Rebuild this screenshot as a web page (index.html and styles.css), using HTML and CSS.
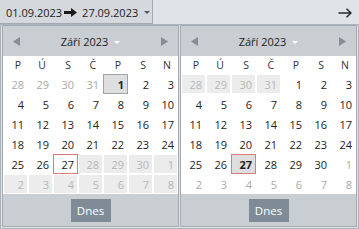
FILE: index.html
```html
<!DOCTYPE html>
<html lang="cs">
<head>
<meta charset="utf-8">
<link rel="stylesheet" href="styles.css">
</head>
<body>
<div class="toolbar">
  <div class="range">
    <span>01.09.2023</span>
    <svg class="bold-arrow" width="13" height="9" viewBox="0 0 13 9"><path d="M0 3h7V0l6 4.5-6 4.5V6H0z" fill="#1a1a1a"/></svg>
    <span class="to">27.09.2023</span>
    <svg class="caret" width="6" height="3" viewBox="0 0 6 3"><path d="M0 0h6L3 3z" fill="#555"/></svg>
  </div>
  <svg class="go" width="14" height="10" viewBox="0 0 14 10"><path d="M0.5 5H13M8.5 0.7L13 5 8.5 9.3" fill="none" stroke="#2a2a2a" stroke-width="1.5"/></svg>
</div>
<div class="popup">
  <div class="cal">
    <div class="head">
      <svg class="nav" width="7" height="9" viewBox="0 0 7 9"><path d="M7 0v9L0 4.5z" fill="#878d94"/></svg>
      <div class="title">Září 2023<svg class="tcaret" width="6" height="3" viewBox="0 0 6 3"><path d="M0 0h6L3 3z" fill="#fff"/></svg></div>
      <svg class="nav" width="7" height="9" viewBox="0 0 7 9"><path d="M0 0v9l7-4.5z" fill="#878d94"/></svg>
    </div>
    <div class="grid">
      <div class="wd">P</div><div class="wd">Ú</div><div class="wd">S</div><div class="wd">Č</div><div class="wd">P</div><div class="wd">S</div><div class="wd">N</div>
      <div class="d o">28</div><div class="d o">29</div><div class="d o">30</div><div class="d o">31</div><div class="d sel">1</div><div class="d">2</div><div class="d">3</div>
      <div class="d">4</div><div class="d">5</div><div class="d">6</div><div class="d">7</div><div class="d">8</div><div class="d">9</div><div class="d">10</div>
      <div class="d">11</div><div class="d">12</div><div class="d">13</div><div class="d">14</div><div class="d">15</div><div class="d">16</div><div class="d">17</div>
      <div class="d">18</div><div class="d">19</div><div class="d">20</div><div class="d">21</div><div class="d">22</div><div class="d">23</div><div class="d">24</div>
      <div class="d">25</div><div class="d">26</div><div class="d today">27</div><div class="d x">28</div><div class="d x">29</div><div class="d x">30</div><div class="d x">1</div>
      <div class="d x">2</div><div class="d x">3</div><div class="d x">4</div><div class="d x">5</div><div class="d x">6</div><div class="d x">7</div><div class="d x">8</div>
    </div>
    <div class="foot"><div class="btn">Dnes</div></div>
  </div>
  <div class="cal">
    <div class="head">
      <svg class="nav" width="7" height="9" viewBox="0 0 7 9"><path d="M7 0v9L0 4.5z" fill="#878d94"/></svg>
      <div class="title">Září 2023<svg class="tcaret" width="6" height="3" viewBox="0 0 6 3"><path d="M0 0h6L3 3z" fill="#fff"/></svg></div>
      <svg class="nav" width="7" height="9" viewBox="0 0 7 9"><path d="M0 0v9l7-4.5z" fill="#878d94"/></svg>
    </div>
    <div class="grid">
      <div class="wd">P</div><div class="wd">Ú</div><div class="wd">S</div><div class="wd">Č</div><div class="wd">P</div><div class="wd">S</div><div class="wd">N</div>
      <div class="d x">28</div><div class="d x">29</div><div class="d x">30</div><div class="d x">31</div><div class="d">1</div><div class="d">2</div><div class="d">3</div>
      <div class="d">4</div><div class="d">5</div><div class="d">6</div><div class="d">7</div><div class="d">8</div><div class="d">9</div><div class="d">10</div>
      <div class="d">11</div><div class="d">12</div><div class="d">13</div><div class="d">14</div><div class="d">15</div><div class="d">16</div><div class="d">17</div>
      <div class="d">18</div><div class="d">19</div><div class="d">20</div><div class="d">21</div><div class="d">22</div><div class="d">23</div><div class="d">24</div>
      <div class="d">25</div><div class="d">26</div><div class="d sel today">27</div><div class="d">28</div><div class="d">29</div><div class="d">30</div><div class="d o">1</div>
      <div class="d o">2</div><div class="d o">3</div><div class="d o">4</div><div class="d o">5</div><div class="d o">6</div><div class="d o">7</div><div class="d o">8</div>
    </div>
    <div class="foot"><div class="btn">Dnes</div></div>
  </div>
</div>
</body>
</html>
```
FILE: styles.css
```css
* { box-sizing: border-box; }
html, body { margin: 0; padding: 0; }
body {
  width: 359px;
  height: 229px;
  overflow: hidden;
  background: #e0e4e8;
  font-family: "Open Sans", "Noto Sans", sans-serif;
  font-size: 11px;
  color: #222;
}
.toolbar {
  display: flex;
  align-items: center;
  height: 24px;
}
.range {
  display: flex;
  align-items: center;
  width: 153px;
  height: 24px;
  padding: 1px 0 0 6px;
  border: 1px solid #a3aab1;
  border-top: none;
  border-left: none;
  background: #d5d9de;
  font-size: 11px;
  color: #222;
}
.bold-arrow { margin-left: 2px; }
.to { margin-left: 5px; }
.caret { margin-left: 6px; margin-top: 1px; }
.go { margin-left: auto; margin-right: 7px; margin-top: 2px; }
.popup {
  display: flex;
  gap: 1px;
  height: 205px;
  padding: 0 1px 1px 1px;
  border: 1px solid #aab2ba;
}
.cal {
  width: 177px;
  height: 202px;
  border: 1px solid #a3abb4;
  display: flex;
  flex-direction: column;
  background: #fff;
}
.head {
  height: 30px;
  background: #c9ced3;
  display: flex;
  align-items: center;
  justify-content: space-between;
  padding: 0 10px;
}
.title {
  display: flex;
  align-items: center;
  font-size: 11px;
  color: #222;
  padding-top: 1px;
}
.tcaret { margin-left: 6px; margin-top: 1px; }
.grid {
  display: grid;
  grid-template-columns: repeat(7, 25px);
  grid-template-rows: 18px repeat(6, 20px);
}
.wd {
  display: flex;
  align-items: center;
  justify-content: flex-end;
  padding-right: 7px;
  font-size: 10.5px;
  color: #333;
}
.d {
  display: flex;
  align-items: center;
  justify-content: flex-end;
  padding-right: 4px;
  color: #222;
}
.d.o { color: #a9a9a9; }
.d.x {
  background: #ececec;
  color: #b6b6b6;
  box-shadow: inset 0 0 0 1px #fff;
}
.d.sel {
  background: #dddee0;
  border: 1px solid #a2a2a2;
  font-weight: 700;
  padding-right: 3px;
}
.d.today {
  border: 1px solid #e07a7a;
  padding-right: 3px;
}
.foot {
  flex: 1;
  background: #c9ced3;
  display: flex;
  justify-content: center;
  padding-top: 5px;
}
.btn {
  width: 40px;
  height: 23px;
  background: #7f8b97;
  color: #fff;
  font-size: 11.5px;
  display: flex;
  align-items: center;
  justify-content: center;
}
```
